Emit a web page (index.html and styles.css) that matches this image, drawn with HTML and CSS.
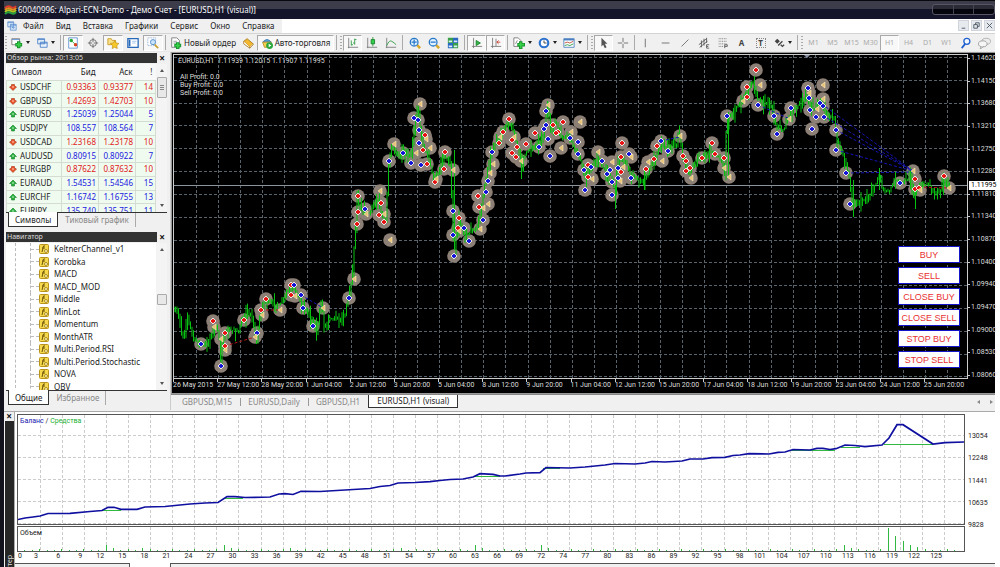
FILE: index.html
```html
<!DOCTYPE html>
<html lang="ru">

  <head>
    <meta charset="UTF-8">
    <meta name="viewport" content="width=device-width, initial-scale=1.0">
    <title>60040996: Alpari-ECN-Demo - Демо Счет - [EURUSD,H1 (visual)]</title>
    <link rel="stylesheet" href="styles.css">
  </head>

  <body>
    <div class="window">
      <header class="titlebar">
        <svg class="logo" viewBox="0 0 13 12">
          <path d="M1 4q3-3 6-1t5-1" stroke="#e03a2a" />
          <path d="M1 6q3-3 6-1t5-1" stroke="#e88a20" />
          <path d="M1 8q3-3 6-1t5-1" stroke="#b8c820" />
          <path d="M1 10q3-3 6-1t5-1" stroke="#28a040" />
        </svg>
        <h1>60040996: Alpari-ECN-Demo - Демо Счет - [EURUSD,H1 (visual)]</h1>
        <div class="winctl"><span></span><span></span><span></span></div>
      </header>

      <nav class="menubar">
        <div class="menu">
          <svg class="icon" viewBox="0 0 12 12"><path d="M1 1h7v6h-7zM4 4h7v7h-7z" fill="#e4f0fc" stroke="#5b8fd0" /><path d="M1 2h7M4 5h7" stroke="#5b8fd0" /><path d="M6 9l1-2 1 2 1-2" fill="none" stroke="#5b8fd0" /></svg>
          <button>Файл</button>
          <button>Вид</button>
          <button>Вставка</button>
          <button>Графики</button>
          <button>Сервис</button>
          <button>Окно</button>
          <button>Справка</button>
        </div>
        <div class="mdi">
          <button aria-label="Свернуть"><svg viewBox="0 0 10 10"><path d="M3 8h4" /></svg></button>
          <button aria-label="Восстановить"><svg viewBox="0 0 10 10"><path d="M4 4v-2h4v4h-2M2 4h4v4h-4z" /></svg></button>
          <button aria-label="Закрыть"><svg viewBox="0 0 10 10"><path d="M2 2l6 6M8 2l-6 6" /></svg></button>
        </div>
      </nav>

      <div class="toolbar">
        <i class="grip"></i>
        <button class="drop" aria-label="Новый график"><svg viewBox="0 0 14 14"><path d="M1 2h9v7h-9z" fill="#fff" stroke="#777" /><path d="M1 3h9" stroke="#5b8fd0" /><path d="M9 5v8M5 9h8" stroke="#14902a" stroke-width="4" /><path d="M9 6v6M6 9h6" stroke="#38d048" stroke-width="2" /></svg></button>
        <button class="drop" aria-label="Профили"><svg viewBox="0 0 14 14"><path d="M2 2h8v6h-8zM5 6h8v6h-8z" fill="#e8f2fc" stroke="#4a80c8" /><path d="M2 3h8M5 7h8" stroke="#4a80c8" /></svg></button>
        <i class="sep"></i>
        <div class="group wide">
          <button class="pressed" aria-label="Обзор рынка"><svg viewBox="0 0 14 14"><path d="M2 1h10v12h-10z" fill="#fff" stroke="#5b8fd0" /><circle cx="5" cy="4" r="2" fill="#20a830" /><path d="M6 5l4 4" stroke="#20a830" /><circle cx="10" cy="9" r="2" fill="#d84020" /></svg></button>
          <button aria-label="Окно данных"><svg viewBox="0 0 14 14"><circle cx="7" cy="7" r="4" fill="none" stroke="#666" /><path d="M7 1v5M7 8v5M1 7h5M8 7h5" stroke="#666" /></svg></button>
          <button class="pressed" aria-label="Навигатор"><svg viewBox="0 0 14 14"><path d="M1 2h4l1 2h4v5h-9z" fill="#f8e088" stroke="#c89a20" /><path d="M9 4l1.500 3 3.500.500-2.500 2.500.500 3.500-3-1.500-3 1.500.500-3.500-2.500-2.500 3.500-.500z" fill="#f8c828" stroke="#b88810" stroke-width=".7" /></svg></button>
          <button aria-label="Терминал"><svg viewBox="0 0 14 14"><path d="M1 2h12v10h-12z" fill="#fff" stroke="#2868b8" stroke-width="1.500" /><path d="M3 3v8" stroke="#2868b8" stroke-width="2" /><path d="M6 5h5M6 7h4" stroke="#9cc0e8" /></svg></button>
          <button class="pressed" aria-label="Тестер стратегий"><svg viewBox="0 0 14 14"><path d="M1 1h9v9h-9z" fill="#fff" stroke="#7aa0cc" stroke-dasharray="1 1" /><circle cx="7" cy="6" r="3" fill="#c8e4fa" stroke="#5088c8" /><path d="M9 9l4 4" stroke="#c8a030" stroke-width="2" /></svg></button>
        </div>
        <i class="sep"></i>
        <button class="text neworder"><svg viewBox="0 0 14 14"><path d="M2 1h6l3 3v8h-9z" fill="#fff" stroke="#777" /><path d="M4 5h4M4 7h4" stroke="#999" /><path d="M9 6v8M5 10h8" stroke="#14902a" stroke-width="4" /><path d="M9 7v6M6 10h6" stroke="#38d048" stroke-width="2" /></svg>Новый ордер</button>
        <button aria-label="MetaEditor"><svg viewBox="0 0 14 14"><path d="M2 5l4-3 7 6-4 4z" fill="#f4b830" stroke="#a87818" /><path d="M2 5v3l7 5v-1M9 12v1l4-4v-1" fill="#fff" stroke="#a87818" /></svg></button>
        <button class="text pressed auto"><svg viewBox="0 0 14 14"><path d="M2 6q5-6 10 0z" fill="#58a8e0" stroke="#3070b0" /><path d="M2 6h10l-3 6h-5z" fill="#f4d050" stroke="#b89020" /><circle cx="10" cy="10" r="4" fill="#28a83c" /><path d="M9 8l3 2-3 2z" fill="#fff" /></svg>Авто-торговля</button>
        <i class="sep"></i>
        <i class="grip"></i>
        <div class="group">
          <button class="pressed" aria-label="Бары"><svg viewBox="0 0 14 14"><path d="M2 1v12M1 12h12" stroke="#777" /><path d="M5 4v6M5 9h2M9 2v7M9 3h2M7 7h2" stroke="#28983c" /></svg></button>
          <button aria-label="Свечи"><svg viewBox="0 0 14 14"><path d="M2 1v12M1 12h12" stroke="#777" /><path d="M8 0v11" stroke="#28983c" /><path d="M6 3h4v5h-4z" fill="#30d048" stroke="#18802a" /></svg></button>
          <button aria-label="Линия"><svg viewBox="0 0 14 14"><path d="M2 1v12M1 12h12" stroke="#777" /><path d="M2 10q3-7 6-5t5 4" fill="none" stroke="#28983c" /></svg></button>
        </div>
        <i class="sep"></i>
        <div class="group">
          <button aria-label="Увеличить"><svg viewBox="0 0 14 14"><path d="M9 9l4 4" stroke="#d8a828" stroke-width="3" /><circle cx="6" cy="6" r="4.500" fill="#e0f2ff" stroke="#2878c8" stroke-width="1.500" /><path d="M3 6h6M6 3v6" stroke="#2878c8" stroke-width="1.500" /></svg></button>
          <button aria-label="Уменьшить"><svg viewBox="0 0 14 14"><path d="M9 9l4 4" stroke="#d8a828" stroke-width="3" /><circle cx="6" cy="6" r="4.500" fill="#e0f2ff" stroke="#2878c8" stroke-width="1.500" /><path d="M3 6h6" stroke="#2878c8" stroke-width="1.500" /></svg></button>
          <button aria-label="Плитка"><svg viewBox="0 0 14 14"><path d="M1 1h6v6h-6zM7 7h6v6h-6z" fill="#38a048" /><path d="M7 1h6v6h-6zM1 7h6v6h-6z" fill="#2868c0" /><path d="M2 4h4v2h-4zM8 4h4v2h-4zM2 10h4v2h-4zM8 10h4v2h-4z" fill="#d8ecfa" /></svg></button>
        </div>
        <i class="sep"></i>
        <div class="group">
          <button class="pressed" aria-label="Автопрокрутка"><svg viewBox="0 0 14 14"><path d="M3 1v12M1 11h12" stroke="#777" /><path d="M6 4l5 3-5 3z" fill="#30b848" stroke="#18802a" /></svg></button>
          <button class="pressed" aria-label="Сдвиг графика"><svg viewBox="0 0 14 14"><path d="M3 1v12M1 11h12M7 2v9" stroke="#777" /><path d="M12 6h-4M10 4l-2 2 2 2" fill="none" stroke="#c83828" /></svg></button>
        </div>
        <i class="sep"></i>
        <button class="drop" aria-label="Индикаторы"><svg viewBox="0 0 14 14"><path d="M1 1h5l3 3v7h-8z" fill="#fff" stroke="#777" /><path d="M3 8l2-4" stroke="#777" /><path d="M9 5v9M5 9h9" stroke="#14902a" stroke-width="4" /><path d="M9 6v7M6 9h7" stroke="#38d048" stroke-width="2" /></svg></button>
        <button class="drop" aria-label="Периоды"><svg viewBox="0 0 14 14"><circle cx="7" cy="7" r="5" fill="#fff" stroke="#2a70cc" stroke-width="2.500" /><path d="M7 4v3h3" fill="none" stroke="#333" /></svg></button>
        <button class="drop" aria-label="Шаблоны"><svg viewBox="0 0 14 14"><path d="M1 2h12v10h-12z" fill="#fff" stroke="#4a80c0" /><path d="M1 3h12" stroke="#4a80c0" stroke-width="2" /><path d="M2 7l3-1 3 1 4-2" fill="none" stroke="#b84830" /><path d="M2 10l3-1 3 1 4-2" fill="none" stroke="#28983c" /></svg></button>
        <i class="sep"></i>
        <i class="grip"></i>
        <div class="group">
          <button class="pressed" aria-label="Курсор"><svg viewBox="0 0 14 14"><path d="M4 1v10l2-2 2 4 2-1-2-4h3z" fill="#555" /></svg></button>
          <button aria-label="Перекрестие"><svg viewBox="0 0 14 14"><path d="M7 1v5M7 8v5M1 7h5M8 7h5" stroke="#666" /></svg></button>
        </div>
        <i class="sep"></i>
        <div class="group">
          <button aria-label="Вертикальная линия"><svg viewBox="0 0 14 14"><path d="M5 2v10" stroke="#666" /></svg></button>
          <button aria-label="Горизонтальная линия"><svg viewBox="0 0 14 14"><path d="M2 7h9" stroke="#666" /></svg></button>
          <button aria-label="Трендовая линия"><svg viewBox="0 0 14 14"><path d="M3 11l8-8" stroke="#666" /></svg></button>
          <button aria-label="Канал"><svg viewBox="0 0 14 14"><path d="M1 9l9-7M2 12l9-7M4 4v8M7 2v8M10 1v6M10 9v4M10 9h3M10 11h2M10 13h3" stroke="#555" fill="none" /></svg></button>
          <button aria-label="Фибоначчи"><svg viewBox="0 0 14 14"><path d="M2 2h10M2 5h10M2 8h10M2 11h5" stroke="#666" stroke-dasharray="1 1" /><path d="M9 13v-4h3v2h-3" fill="none" stroke="#555" /></svg></button>
          <button class="glyph">A</button>
          <button class="glyph"><span class="boxed">T</span></button>
        </div>
        <button class="drop" aria-label="Стрелки"><svg viewBox="0 0 14 14"><path d="M5 2l3 3-3 3-3-3z" fill="#444" /><path d="M6 10l5-5M9 9l2 2 2-2" fill="none" stroke="#444" stroke-width="1.500" /></svg></button>
        <i class="sep"></i>
        <i class="grip"></i>
        <div class="group periods">
          <button>M1</button>
          <button>M5</button>
          <button>M15</button>
          <button>M30</button>
          <button class="pressed">H1</button>
          <button>H4</button>
          <button>D1</button>
          <button>W1</button>
        </div>
        <button aria-label="Поиск"><svg viewBox="0 0 14 14"><circle cx="8" cy="5" r="3.500" fill="#f4f8ff" stroke="#2060d0" stroke-width="1.500" /><path d="M6 8l-4 5" stroke="#2060d0" stroke-width="2" /></svg></button>
        <button aria-label="Чат"><svg class="chat" viewBox="0 0 16 14"><ellipse cx="10" cy="5" rx="5" ry="3.500" fill="#eee" stroke="#aaa" /><ellipse cx="6" cy="8" rx="5" ry="3.500" fill="#f6f6f6" stroke="#999" /><path d="M4 11l-1 3 4-3" fill="#f6f6f6" stroke="#999" /></svg></button>
      </div>

      <main class="workspace">
        <aside class="side">
          <section class="market">
            <div class="panel-title"><h2>Обзор рынка: 20:13:05</h2><button class="close" aria-label="Закрыть">×</button></div>
            <div class="panel-body">
              <div class="scroll quotes-box">
                <table class="quotes">
                  <thead>
                    <tr><th>Символ</th><th>Бид</th><th>Аск</th><th>!</th></tr>
                  </thead>
                  <tbody id="quotes"></tbody>
                </table>
              </div>
              <div class="scrollbar"><i class="thumb lined"></i></div>
            </div>
            <div class="tabs"><button class="active">Символы</button><button>Тиковый график</button></div>
          </section>

          <section class="navigator">
            <div class="panel-title"><h2>Навигатор</h2><button class="close" aria-label="Закрыть">×</button></div>
            <div class="panel-body">
              <div class="scroll tree-box">
                <ul class="tree" id="tree"></ul>
              </div>
              <div class="scrollbar middle"><i class="thumb"></i></div>
            </div>
            <div class="tabs"><button class="active">Общие</button><button>Избранное</button></div>
          </section>
        </aside>

        <section class="charts">
          <div class="chart">
            <div class="plot">
              <svg id="price" viewBox="174 55 793 323"></svg>
              <div class="legend">
                <p>EURUSD,H1&nbsp; 1.11939 1.12015 1.11907 1.11995</p>
                <p class="profit">All Profit: 0.0<br>Buy Profit: 0.0<br>Sell Profit: 0.0</p>
              </div>
              <div class="trade">
                <button>BUY</button>
                <button>SELL</button>
                <button>CLOSE BUY</button>
                <button>CLOSE SELL</button>
                <button>STOP BUY</button>
                <button>STOP SELL</button>
              </div>
            </div>
            <div class="yaxis">
              <div class="ylabels" id="yaxis"></div>
              <span class="last">1.11995</span>
            </div>
            <div class="xaxis" id="xaxis"></div>
          </div>
          <div class="chart-tabs">
            <button>GBPUSD,M15</button>
            <button>EURUSD,Daily</button>
            <button>GBPUSD,H1</button>
            <button class="active">EURUSD,H1 (visual)</button>
            <span class="arrows"><i></i><i></i></span>
          </div>
        </section>
      </main>

      <section class="tester">
        <div class="strip">
          <button class="close" aria-label="Закрыть">×</button>
          <div class="strip-title"><span>Тестер</span></div>
        </div>
        <div class="report">
          <div class="balance">
            <div class="box">
              <svg id="balance" viewBox="18 415 946 109"></svg>
              <p class="caption"><span class="blue">Баланс</span> / <span class="green">Средства</span></p>
            </div>
            <div class="blabels"><span>13054</span><span>12248</span><span>11441</span><span>10635</span><span>9828</span></div>
          </div>
          <div class="box volume">
            <svg id="volume" viewBox="18 527 946 24"></svg>
            <p class="caption">Объем</p>
          </div>
          <div class="trades" id="trades"></div>
          <div class="bottom-tabs"><i></i><i class="on"></i><i></i></div>
        </div>
      </section>
    </div>

    <script src="script.js"></script>
  </body>

</html>
```

FILE: styles.css
```css
* {
  box-sizing: border-box;
}

body {
  margin: 0;
  background-color: #fff;
  color: #222;
  font-family: "Noto Sans", "Open Sans", sans-serif;
  font-size: 8px;
  line-height: 10px;
}

h1, h2, p, ul {
  margin: 0;
  padding: 0;
  font-size: inherit;
  font-weight: normal;
}

button {
  margin: 0;
  padding: 0;
  border: 0;
  background: none;
  color: inherit;
  font: inherit;
  white-space: nowrap;
}

svg {
  display: block;
}

.window {
  display: flex;
  flex-direction: column;
  min-height: 100vh;
  margin-right: 5px;
  border-left: 4px solid #12121f;
  background-color: #f0f0f0;
}

/* Title bar */
.titlebar {
  flex: none;
  display: flex;
  align-items: center;
  height: 19px;
  background: linear-gradient(#08080f 0 1px, #3c3c4a 1px 9px, #14152a 9px);
  color: #fff;
}

.logo {
  width: 13px;
  height: 12px;
  margin-right: 1px;
  fill: none;
  stroke-width: 2;
}

.titlebar h1 {
  flex: 1;
}

.winctl {
  display: flex;
  width: 63px;
  height: 11px;
  border: 1px solid #555563;
  border-radius: 3px;
  background: linear-gradient(#2b2b38 0 4px, #05050d 4px);
}

.winctl span {
  flex: 1;
  border-right: 1px solid #444452;
}

.winctl span:last-child {
  border: 0;
}

/* Menu */
.menubar {
  flex: none;
  display: flex;
  justify-content: space-between;
  height: 14px;
  background-color: #fff;
}

.menu {
  display: flex;
  align-items: center;
  gap: 12px;
  padding: 0 8px 0 3px;
  background-color: #f0f0f0;
}

.menu .icon {
  width: 10px;
  height: 10px;
  margin-right: -6px;
}

.mdi {
  display: flex;
  gap: 2px;
  padding-top: 1px;
}

.mdi button {
  width: 11px;
  height: 11px;
  border: 1px solid #d0d4da;
  background-color: #e6e9ee;
}

.mdi path {
  fill: none;
  stroke: #4c5663;
}

/* Toolbar */
.toolbar {
  flex: none;
  display: flex;
  align-items: center;
  height: 19px;
  border-top: 1px solid #d4d4d4;
  border-bottom: 1px solid #e8e8e8;
}

.toolbar button {
  display: flex;
  flex: none;
  align-items: center;
  justify-content: center;
  width: 19px;
  height: 16px;
}

.toolbar svg {
  flex: none;
  width: 12px;
  height: 12px;
  fill: none;
}

.toolbar .chat {
  width: 15px;
}

.toolbar .pressed {
  border: 1px solid #fff;
  border-top-color: #a8a8a8;
  border-left-color: #a8a8a8;
  background-color: #f8f8f8;
}

.group {
  display: flex;
}

.toolbar .wide button {
  width: 20px;
}

.toolbar .text {
  gap: 2px;
}

.toolbar .neworder {
  width: 70px;
}

.toolbar .auto {
  width: 77px;
}

.toolbar .drop {
  width: 25px;
  gap: 3px;
}

.drop::after {
  content: "";
  border: 2px solid transparent;
  border-top: 3px solid #222;
  border-bottom: 0;
}

.grip {
  flex: none;
  width: 4px;
  height: 13px;
  background: repeating-linear-gradient(#aaa 0 1px, #f0f0f0 1px 3px) 1px 0 / 2px 100% no-repeat;
}

.sep {
  flex: none;
  width: 5px;
  height: 15px;
  background: linear-gradient(#aaa, #aaa) 2px 0 / 1px 100% no-repeat;
}

.toolbar .glyph {
  color: #444;
  font-weight: bold;
}

.boxed {
  width: 10px;
  border: 1px dotted #888;
  line-height: 8px;
}

.toolbar .periods button {
  color: #aaa;
  font-size: 7px;
}

/* Left side */
.workspace {
  flex: none;
  display: flex;
}

.side {
  flex: none;
  width: 167px;
  padding: 1px 3px 0 2px;
  border-right: 1px solid #ccc;
}

.panel-title {
  display: flex;
  justify-content: space-between;
  height: 10px;
  margin-bottom: 1px;
  line-height: 9px;
}

.panel-title h2 {
  flex: 1;
  padding-left: 1px;
  background-color: #333;
  color: #ddd;
  font-size: 7px;
}

.close {
  width: 10px;
  color: #111;
  font-size: 10px;
  font-weight: bold;
  line-height: 9px;
}

.panel-body {
  display: flex;
  background-color: #fff;
}

.scroll {
  flex: 1;
  overflow: hidden;
}

.quotes-box {
  height: 148px;
}

.quotes {
  width: 100%;
  height: 154px;
  border-collapse: collapse;
  table-layout: fixed;
}

.quotes th {
  height: 16px;
  padding: 0 3px;
  background-color: #f8f8f8;
  font-weight: normal;
  text-align: right;
}

.quotes th:first-child {
  width: 55px;
  text-align: left;
  padding-left: 5px;
}

.quotes th:last-child {
  width: 20px;
}

.quotes td {
  padding: 0 2px 0 0;
  border: 1px solid #d4dcd4;
  background-color: #f0fbf0;
  line-height: 8px;
  text-align: right;
}

.quotes td:first-child {
  text-align: left;
}

.quotes svg {
  display: inline-block;
  width: 8px;
  height: 8px;
  margin: 0 3px 0 2px;
  vertical-align: top;
}

.quotes .down td + td {
  color: #e02020;
}

.quotes .up td + td {
  color: #2020e0;
}

.scrollbar {
  display: flex;
  flex-direction: column;
  align-items: center;
  width: 11px;
  background-color: #f4f4f4;
}

.scrollbar::before,
.scrollbar::after {
  content: "";
  margin: 5px 0;
  border: 2px solid transparent;
  border-bottom: 3px solid #555;
  border-top: 0;
}

.scrollbar::after {
  margin-top: auto;
  transform: rotate(180deg);
}

.thumb {
  width: 10px;
  height: 11px;
  border: 1px solid #aaa;
  border-radius: 1px;
  background-color: #e8e8e8;
}

.lined {
  height: 21px;
  background: linear-gradient(#888 0 1px, transparent 1px 2px, #888 2px 3px, transparent 3px 4px, #888 4px 5px, transparent 5px) 2px 7px / 4px 6px no-repeat, #e8e8e8;
}

.middle .thumb {
  margin-top: 38px;
}

.tabs {
  display: flex;
  height: 20px;
  align-items: flex-start;
  border-top: 1px solid #333;
}

.tabs button {
  height: 14px;
  padding: 0 7px;
  color: #888;
}

.tabs .active {
  height: 15px;
  margin: -1px 0 0 2px;
  padding: 1px 6px 0;
  border: 1px solid #333;
  border-top: 0;
  background-color: #fff;
  color: #222;
}

.tabs button:last-child {
  box-shadow: inset -1px 0 #aaa;
}

.navigator .tabs {
  height: 15px;
}

.tree-box {
  height: 147px;
}

.tree {
  display: grid;
  grid-auto-rows: 1fr;
  height: 150px;
  margin-left: 9px;
  border-left: 1px dashed #bbb;
  list-style: none;
}

.tree li {
  display: flex;
  align-items: center;
  margin-left: 14px;
  border-left: 1px dashed #bbb;
}

.tree li::before {
  content: "";
  width: 8px;
  border-top: 1px dashed #bbb;
}

.tree svg {
  width: 10px;
  height: 10px;
  margin-right: 5px;
}

/* Price chart */
.charts {
  flex: 1;
  min-width: 0;
}

.chart {
  display: grid;
  grid-template-columns: 1fr 27px;
  padding: 1px 0 2px 1px;
  border: 1px solid #999;
  border-right: 0;
  background-color: #000;
  color: #ddd;
  font-family: "Roboto", "Noto Sans", sans-serif;
  font-size: 7px;
  line-height: 8px;
}

.plot {
  position: relative;
  border: 1px solid #ccc;
}

.legend {
  position: absolute;
  top: 2px;
  left: 4px;
}

.profit {
  margin: 8px 0 0 2px;
}

.trade {
  position: absolute;
  right: 7px;
  bottom: 10px;
  display: grid;
  gap: 4px;
  width: 62px;
}

.trade button {
  height: 17px;
  border: 1px solid #1414c8;
  background-color: #fff;
  color: #e83030;
  font-family: "Liberation Sans", sans-serif;
  font-size: 9px;
}

.yaxis {
  position: relative;
}

.ylabels {
  display: flex;
  flex-direction: column;
  justify-content: space-between;
  height: 100%;
}

.ylabels span {
  padding-left: 3px;
  background: linear-gradient(#ccc, #ccc) 0 4px / 2px 1px no-repeat;
  white-space: nowrap;
}

.last {
  position: absolute;
  top: 39%;
  left: 1px;
  right: 0;
  padding-left: 2px;
  background-color: #fff;
  color: #000;
  line-height: 9px;
}

.xaxis {
  display: grid;
  grid-auto-flow: column;
  grid-auto-columns: 1fr;
  height: 12px;
}

.xaxis span {
  border-left: 1px solid #ccc;
  height: 3px;
  padding-top: 2px;
  white-space: nowrap;
  text-indent: -1px;
}

.chart-tabs {
  display: flex;
  height: 16px;
  padding-left: 3px;
  border-top: 1px solid #888;
  color: #888;
}

.chart-tabs button {
  height: 13px;
  padding: 0 8px;
}

.chart-tabs button + button {
  background: linear-gradient(#999, #999) 0 3px / 1px 8px no-repeat;
}

.chart-tabs .active {
  border: 1px solid #333;
  border-top: 0;
  background: #fff;
  color: #222;
}

.arrows {
  display: flex;
  gap: 10px;
  margin: 5px 2px 0 auto;
}

.arrows i {
  border: 2px solid transparent;
  border-right: 3px solid #888;
  border-left: 0;
  height: 4px;
}

.arrows i + i {
  transform: rotate(180deg);
}

/* Tester */
.tester {
  flex: 1;
  display: flex;
  margin-top: 1px;
  border-top: 1px solid #aaa;
}

.strip {
  flex: none;
  display: flex;
  flex-direction: column;
  width: 11px;
  border-right: 1px solid #aaa;
}

.strip-title {
  flex: 1;
  display: flex;
  align-items: flex-end;
  width: 9px;
  margin-left: 1px;
  background-color: #262626;
  color: #ddd;
  overflow: hidden;
}

.strip-title span {
  margin-bottom: -10px;
  font-size: 7px;
  line-height: 9px;
  writing-mode: vertical-rl;
  transform: rotate(180deg);
}

.report {
  flex: 1;
  display: flex;
  flex-direction: column;
  padding: 2px 0 0 2px;
  background-color: #fff;
  font-family: "Roboto", "Noto Sans", sans-serif;
  font-size: 7px;
  line-height: 8px;
}

.balance {
  display: grid;
  grid-template-columns: 1fr 30px;
}

.box {
  position: relative;
  border: 1px solid #555;
}

.volume {
  margin: 1px 30px 0 0;
}

.caption {
  position: absolute;
  top: 2px;
  left: 2px;
}

.blue {
  color: #2020b0;
}

.green {
  color: #20b030;
}

.blabels {
  display: flex;
  flex-direction: column;
  justify-content: space-between;
  padding: 18px 0 0 3px;
  margin-bottom: -4px;
}

.trades {
  display: grid;
  grid-template-columns: repeat(43, 1fr);
  height: 11px;
  margin-right: 30px;
}

.trades span {
  display: flex;
  justify-content: flex-end;
  padding: 0 1px;
}

.trades span:first-child {
  justify-content: space-between;
}

.trades span:first-child::before {
  content: "0";
}

.bottom-tabs {
  flex: 1;
  display: flex;
  margin-left: -2px;
  background-color: #f0f0f0;
}

.bottom-tabs i {
  border-top: 1px solid #555;
  width: 114px;
}

.bottom-tabs .on {
  width: 42px;
  border: 1px solid #555;
  border-width: 0 1px;
  background-color: #fff;
}

.bottom-tabs i:last-child {
  flex: 1;
}
```

FILE: script.js
```js
const quotes = [
  ['USDCHF', '0.93363', '0.93377', 14, 'down'],
  ['GBPUSD', '1.42693', '1.42703', 10, 'down'],
  ['EURUSD', '1.25039', '1.25044', 5, 'up'],
  ['USDJPY', '108.557', '108.564', 7, 'up'],
  ['USDCAD', '1.23168', '1.23178', 10, 'down'],
  ['AUDUSD', '0.80915', '0.80922', 7, 'up'],
  ['EURGBP', '0.87622', '0.87632', 10, 'down'],
  ['EURAUD', '1.54531', '1.54546', 15, 'up'],
  ['EURCHF', '1.16742', '1.16755', 13, 'up'],
  ['EURJPY', '135.740', '135.751', 11, 'up']
];

const arrows = {
  up: '<svg viewBox="0 0 8 8"><path d="M4 1l3.500 3.500h-2v2.500h-3v-2.500h-2z" fill="#28b03c" stroke="#14802a" stroke-width=".6"/><path d="M3 4h2" stroke="#c0f0c8"/></svg>',
  down: '<svg viewBox="0 0 8 8"><path d="M4 7.500l3.500-3.500-2-1v-1.500h-3v1.500l-2 1z" fill="#e8542c" stroke="#a83010" stroke-width=".6"/><path d="M3 4h2" stroke="#ffd0b8"/></svg>'
};

document.getElementById('quotes').innerHTML = quotes.map(q =>
  `<tr class="${q[4]}"><td>${arrows[q[4]]}${q[0]}</td><td>${q[1]}</td><td>${q[2]}</td><td>${q[3]}</td></tr>`).join('');

const indicators = ['KeltnerChannel_v1', 'Korobka', 'MACD', 'MACD_MOD', 'Middle', 'MinLot', 'Momentum',
  'MonthATR', 'Multi.Period.RSI', 'Multi.Period.Stochastic', 'NOVA', 'OBV'];
const fx = '<svg viewBox="0 0 10 10"><rect x=".5" y=".5" width="9" height="9" rx="1" fill="#f6d84c" stroke="#b8941c"/><path d="M6 2q-2-1-2 2l-1 4M3 4h3" fill="none" stroke="#6a5208"/><circle cx="7" cy="7" r="1.5" fill="#fff4b0" stroke="#8a6c10" stroke-width=".7"/></svg>';
document.getElementById('tree').innerHTML = indicators.map(n => `<li>${fx}${n}</li>`).join('');

const spans = list => list.map(t => `<span>${t}</span>`).join('');

document.getElementById('yaxis').innerHTML = spans(['1.14620', '1.14150', '1.13680', '1.13210', '1.12750',
  '1.12280', '1.11810', '1.11340', '1.10870', '1.10400', '1.09940', '1.09470', '1.09000', '1.08530', '1.08060']);

document.getElementById('xaxis').innerHTML = spans(['26 May 2015', '27 May 12:00', '28 May 20:00', '1 Jun 04:00',
  '2 Jun 12:00', '3 Jun 20:00', '5 Jun 04:00', '8 Jun 12:00', '9 Jun 20:00', '11 Jun 04:00', '12 Jun 12:00',
  '15 Jun 20:00', '17 Jun 04:00', '18 Jun 12:00', '19 Jun 20:00', '23 Jun 04:00', '24 Jun 12:00', '25 Jun 20:00']);

// Trade numbers: the step skips one after 72
let labels = [];
for (let i = 3; i <= 72; i += 3) labels.push(i);
for (let i = 74; i <= 125; i += 3) labels.push(i);
document.getElementById('trades').innerHTML = spans(labels);

// Repeatable random numbers, so that the bars are the same on each load
let seed = 7;
function random() {
  seed = (seed * 16807) % 2147483647;
  return seed / 2147483647;
}

function valueAt(points, x) {
  for (let i = 1; i < points.length; i++) {
    const [x0, y0] = points[i - 1];
    const [x1, y1] = points[i];
    if (x <= x1) return y0 + (y1 - y0) * (x - x0) / (x1 - x0);
  }
  return points[points.length - 1][1];
}

function parse(text) {
  return text.trim().split(/\s+/).map(p => p.split(',').map(Number));
}

function grid(x0, x1, dx, y0, y1, dy, top, left, color) {
  let d = '';
  for (let x = x0; x < x1; x += dx) d += `M${Math.round(x) + 0.5} ${top}V${y1}`;
  for (let y = y0; y < y1; y += dy) d += `M${left} ${Math.round(y) + 0.5}H${x1}`;
  return `<path d="${d}" fill="none" stroke="${color}" stroke-dasharray="3 2"/>`;
}

const price = parse(`174,311 178,309 181,320 183,335 187,330 189,316 192,328 195,338 201,344 208,345 213,335
  215,325 220,332 222,358 224,345 227,332 232,330 240,331 244,320 249,312 253,316 256,332 258,340 261,318 266,300
  272,302 280,306 284,300 288,292 294,288 298,292 303,305 309,312 314,322 318,332 321,312 323,300 326,330 330,318
  335,318 340,320 346,317 349,298 353,280 355,255 357,225 358,198 362,210 370,214 375,205 380,200 384,218 388,220
  389,170 393,148 400,156 405,152 411,155 415,140 418,105 421,125 424,145 430,158 435,178 440,172 446,156 452,165
  454,230 456,248 460,220 466,235 472,232 478,228 482,212 486,185 490,165 494,148 500,140 509,122 515,132 520,150
  523,166 527,152 538,145 545,135 549,104 552,130 557,120 562,138 570,135 576,148 582,160 586,180 592,168 600,160
  607,172 612,176 616,190 620,160 626,160 632,174 638,180 644,182 650,172 655,160 662,145 670,148 678,144 680,130
  684,158 690,172 700,160 712,152 722,158 726,172 728,120 735,112 742,102 748,92 755,80 758,98 765,104 772,104
  778,128 785,130 792,112 800,105 807,97 815,110 822,100 828,114 836,120 838,140 845,155 851,180 854,204 860,202
  868,200 875,188 881,176 884,190 890,192 896,180 904,182 912,178 915,196 920,186 930,184 936,192 942,190 945,180 950,187`);

const marks = {
  r: `213,321 225,333 225,346 244,320 266,299 261,310 291,285 291,295 358,196 358,212 357,224 381,203 379,215
    384,222 425,135 423,150 427,164 435,182 444,169 445,152 459,218 458,228 479,207 478,196 499,143 503,132 509,119
    512,140 517,147 512,153 516,157 526,144 535,133 553,125 563,122 558,132 556,133 588,165 588,177 622,143 621,157
    621,172 646,169 654,159 657,146 683,156 686,161 690,168 686,171 702,158 712,143 715,154 724,158 756,70 747,87
    747,97 915,179 915,189 919,188 944,176`,
  b: `201,344 221,366 257,333 294,285 301,295 303,308 313,326 349,298 365,209 389,161 403,153 414,118 418,120
    419,130 419,143 411,163 421,165 453,211 464,228 453,235 454,256 469,241 483,220 486,192 488,181 492,152 539,147
    546,111 546,125 544,129 548,139 570,138 578,142 550,156 578,154 584,170 591,167 602,161 585,190 610,170 607,174
    612,182 612,195 629,154 618,168 618,178 631,178 661,141 668,151 727,116 758,105 774,116 777,134 791,108 808,88
    809,98 810,110 816,117 820,103 823,106 824,117 812,129 836,130 836,150 846,173 850,204 900,183`,
  y: `214,327 221,339 225,350 262,315 255,337 280,310 295,296 323,308 354,279 390,240 366,214 380,191 384,214
    394,144 420,104 426,139 430,148 416,153 436,179 453,170 459,231 480,229 483,208 488,204 490,173 493,164 500,137
    514,137 521,161 548,105 580,122 571,132 561,148 598,152 592,179 612,162 631,157 623,167 620,181 648,162 662,161
    680,136 691,178 724,168 729,177 760,85 743,101 789,119 809,93 823,85 817,109 823,99 913,171 920,190 949,188`
};

function drawPrice() {
  let svg = grid(196, 967, 22.1, 57, 378, 22.82, 55, 174, '#59636b');
  svg += '<path d="M174 185.500H967" stroke="#8a949c"/><path d="M804 55h6l-3 3z" fill="#8a94a8"/>';

  let circles = '';
  let signs = '';
  for (let type in marks) {
    parse(marks[type]).forEach(([x, y]) => {
      circles += `<circle cx="${x}" cy="${y}" r="6.8"/>`;
      if (type === 'y') {
        signs += `<path d="M${x - 2} ${y}l4-3v6z" fill="#e8c070" stroke="#fff0c0" stroke-width=".6"/>`;
      } else {
        signs += `<path d="M${x - 3} ${y}l3-3 3 3-3 3z" fill="#fff" stroke="#fff" stroke-width=".6"/>`;
        signs += `<path d="M${x - 2} ${y}h4M${x} ${y - 2}v4" stroke="${type === 'r' ? '#e81010' : '#1010d8'}" stroke-width="1.800"/>`;
      }
    });
  }
  svg += `<g fill="#8c7f76">${circles}</g>`;

  let bars = '';
  for (let x = 174; x <= 950; x += 1.5) {
    const a = valueAt(price, x);
    const b = valueAt(price, x + 1.5);
    const long = random() > 0.7 ? 11 : 4;
    const top = Math.min(a, b) - random() * long;
    const bottom = Math.max(a, b) + random() * long;
    bars += `M${x} ${top.toFixed(1)}V${bottom.toFixed(1)}`;
  }
  bars += 'M454.500 150V250M728.500 112V178M615.500 185V209M521.500 160V179M853.500 180V217M915.500 190V209M644.500 170V190M879.500 168V190';
  svg += `<path d="${bars}" stroke="#08c010"/>`;

  svg += '<path d="M826 107L913 171M827 118L913 171M836 130L913 171M836 150L913 171M846 173L913 172M758 105L790 119M661 141L680 137M301 295L323 308" stroke="#1414b8" stroke-dasharray="3 2"/>';
  svg += '<path d="M225 346L255 337M261 310L280 310M919 187L949 188" stroke="#b01414" stroke-dasharray="3 2"/>';
  document.getElementById('price').innerHTML = svg + signs;
}

const balance = `18,519.5 25,518 33,517 40,516 48,513.5 70,513.3 90,511.5 102,510.5 108,507.3 114,507.3 121,509.3
  137,509.3 145,507 165,506.5 180,505 190,504 205,503 218,502.5 227,496.5 235,496.7 245,497.5 270,497 279,494
  285,493.7 293,494.5 301,491.3 320,491.5 345,490 370,488.5 380,486.5 390,485.5 398,483 415,482.5 430,481.7
  440,480.5 450,479.5 463,479 473,477 480,473.7 493,474.3 500,476 505,476 520,474 526,473 540,472.7 546,467.5
  570,468 585,467 605,465 615,463.5 635,464 645,463 652,461.5 665,462 682,461 690,459 703,459 712,457.7 725,457.3
  733,455.5 740,455 749,453.7 769,454 778,452.3 785,452 793,449.5 810,450 817,448.3 823,448.3 830,449.5 836,448.7
  845,445 855,445.5 865,446.7 882,445 889,438 897,424.7 903,424.7 933,444 945,442.7 964,442`;

function drawReport() {
  let svg = grid(40, 964, 22.05, 435, 524, 22, 415, 18, '#ccc');
  svg += '<path d="M103 510.500H121M223 498.500H243M475 476.500H500M543 468.500H560M790 450.500H835M841 447.500H860M884 444.500H933" stroke="#30b840"/>';
  svg += `<polyline points="${balance}" fill="none" stroke="#1010a0" stroke-width="1.700"/>`;
  document.getElementById('balance').innerHTML = svg;

  const tall = { 12: 6, 13: 3, 17: 3, 28: 6, 29: 3, 37: 3, 52: 3, 62: 6, 63: 3, 71: 6, 72: 3, 112: 6, 113: 3, 118: 23, 119: 15, 120: 10, 121: 6, 122: 4 };
  let bars = '';
  for (let i = 1; i < 128; i++) {
    bars += `M${Math.round(17 + i * 7.38) + 0.5} 551v-${tall[i] || 1 + (i * 7 % 3 === 0 ? 1 : 0)}`;
  }
  document.getElementById('volume').innerHTML = grid(40, 964, 22.05, 600, 551, 22, 527, 18, '#ccc') + `<path d="${bars}" stroke="#30b840"/>`;
}

drawPrice();
drawReport();
```
